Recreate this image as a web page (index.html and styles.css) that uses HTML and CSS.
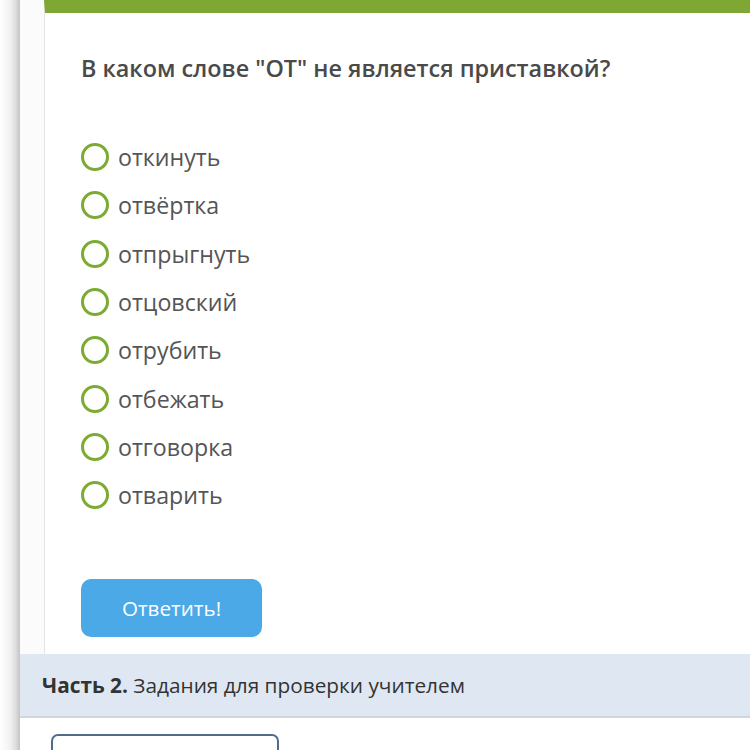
FILE: index.html
```html
<!DOCTYPE html>
<html lang="ru">
<head>
<meta charset="utf-8">
<link rel="stylesheet" href="styles.css">
</head>
<body>
<div class="page">
  <div class="panel">
    <div class="inner">
      <div class="card">
        <div class="question">В каком слове "ОТ" не является приставкой?</div>
        <ul class="options">
          <li class="option"><span class="radio"></span><span class="label">откинуть</span></li>
          <li class="option"><span class="radio"></span><span class="label">отвёртка</span></li>
          <li class="option"><span class="radio"></span><span class="label">отпрыгнуть</span></li>
          <li class="option"><span class="radio"></span><span class="label">отцовский</span></li>
          <li class="option"><span class="radio"></span><span class="label">отрубить</span></li>
          <li class="option"><span class="radio"></span><span class="label">отбежать</span></li>
          <li class="option"><span class="radio"></span><span class="label">отговорка</span></li>
          <li class="option"><span class="radio"></span><span class="label">отварить</span></li>
        </ul>
        <button class="answer">Ответить!</button>
      </div>
    </div>
    <div class="part"><b>Часть 2.</b> Задания для проверки учителем</div>
    <div class="below">
      <div class="outline-btn"></div>
    </div>
  </div>
</div>
</body>
</html>
```

FILE: styles.css
```css
html, body {
  margin: 0;
  padding: 0;
  height: 750px;
  overflow: hidden;
}
body {
  background: linear-gradient(to right, #ffffff 0px, #f2f2f2 10px, #dcdcdc 16px, #c8c8c8 19px);
  background-repeat: no-repeat;
  background-size: 20px 100%;
  font-family: "Open Sans", "Noto Sans", sans-serif;
}
.page {
  padding-left: 20px;
}
.panel {
  background: #fbfbfb;
}
.inner {
  padding-left: 24px;
}
.card {
  background: #fff;
  border-left: 1px solid #e4e4e4;
  border-top: 13px solid #7ea833;
  padding: 39px 0 17px 36px;
}
.question {
  font-size: 23.4px;
  line-height: 32px;
  font-weight: 600;
  color: #4a4a4a;
  white-space: nowrap;
}
.options {
  list-style: none;
  margin: 49px 0 0 0;
  padding: 0;
}
.option {
  height: 48.3px;
  display: flex;
  align-items: center;
}
.radio {
  width: 22px;
  height: 22px;
  border: 3px solid #7cab33;
  border-radius: 50%;
  box-sizing: content-box;
  flex: none;
}
.label {
  margin-left: 9px;
  font-size: 23.2px;
  color: #555555;
  line-height: 30px;
}
.answer {
  display: block;
  margin-top: 60px;
  width: 181px;
  height: 58px;
  border: none;
  border-radius: 10px;
  background: #4ca9e7;
  color: #ffffff;
  font-family: "Open Sans", "Noto Sans", sans-serif;
  font-size: 20.6px;
  padding: 0;
}
.part {
  background: #dfe8f2;
  border-bottom: 2px solid #cfd6dd;
  height: 62px;
  line-height: 62px;
  padding-left: 22px;
  font-size: 20.8px;
  color: #333333;
}
.part b {
  font-weight: 700;
}
.below {
  background: #ffffff;
  padding: 16px 0 0 31px;
  height: 40px;
}
.outline-btn {
  width: 224px;
  height: 40px;
  border: 2px solid #4f6c8c;
  border-radius: 7px;
}
```
